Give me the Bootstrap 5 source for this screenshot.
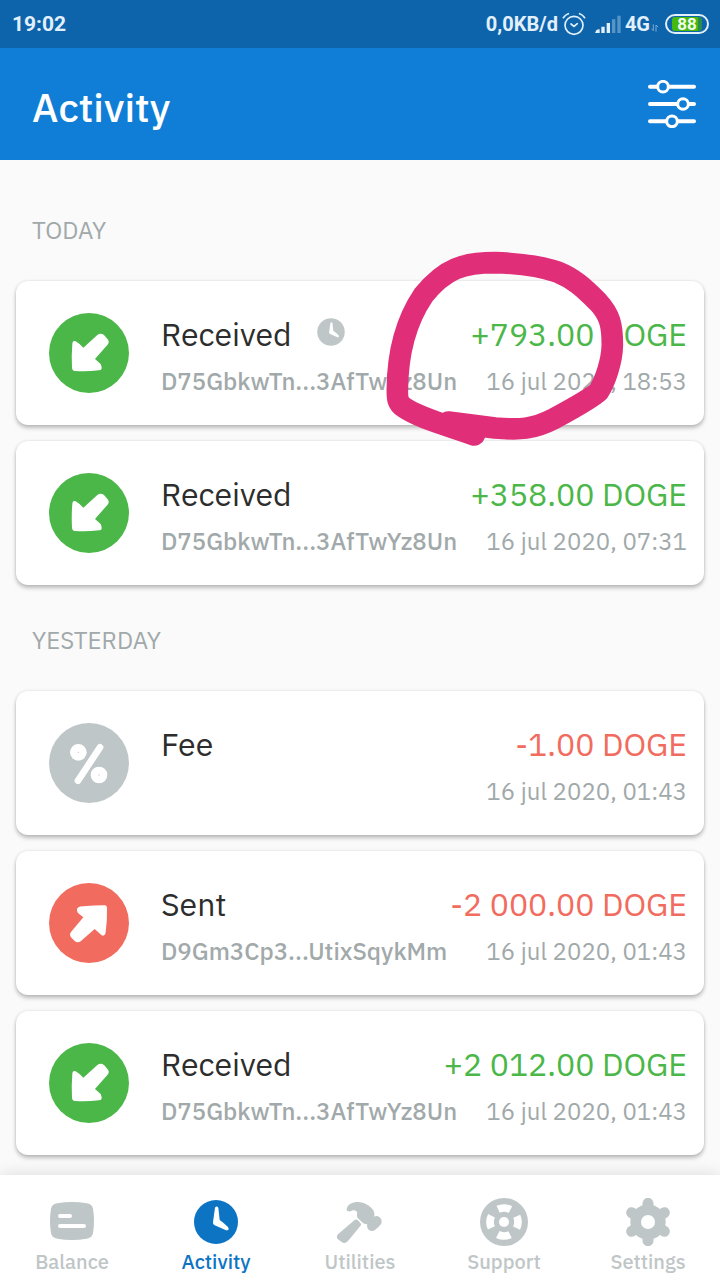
<!DOCTYPE html>
<html lang="en">
<head>
<meta charset="utf-8">
<meta name="viewport" content="width=device-width, initial-scale=1">
<title>Activity</title>
<link href="https://cdn.jsdelivr.net/npm/bootstrap@5.3.0/dist/css/bootstrap.min.css" rel="stylesheet">
<style>
  :root { --in: #4bb748; --out: #f16c5e; --muted: #a1a9aa; --idle: #bfc6c7; --brand: #0d74c4; }
  body { background: #fafafa; color: #2d2d2d; font-family: "IBM Plex Sans", Roboto, sans-serif; }
  .status-bar { background: #0e64ab; color: #e2f0fb; height: 48px; padding: 0 11px 0 12px; font: 700 20px/48px Roboto, sans-serif; }
  .status-time { font-size: 21px; }
  .battery { width: 44px; height: 20px; margin-left: 6px; border: 2px solid #e2f0fb; border-radius: 10px; padding: 1px 5px; }
  .battery-level { background: linear-gradient(90deg, #45b90c 88%, #2b8c50 88%); color: #f4fff0; border-radius: 3px; height: 14px; font-size: 17px; line-height: 14px; }
  .app-header { background: #107ed6; height: 112px; padding: 0 24px 0 32px; }
  .app-title { color: #fff; font-size: 40px; line-height: 48px; font-weight: 500; margin: 6px 0 0; }
  .filter-btn { line-height: 0; }
  .feed { padding: 15px 16px 20px; }
  .day { color: var(--muted); font-size: 24px; line-height: 30px; padding: 40px 16px 36px; margin: 0; font-weight: 400; }
  .tx { background: #fff; border-radius: 12px; padding: 32px 17px 18px 33px; gap: 32px; box-shadow: 0 3px 4px rgba(0,0,0,.24), 0 0 3px rgba(0,0,0,.12); }
  .tx-icon { width: 80px; height: 80px; }
  .tx-main { font-size: 32px; line-height: 42px; }
  .tx-sub { color: var(--muted); font-size: 24px; line-height: 52px; }
  .tx-sub .addr { font-weight: 500; }
  .pending { color: var(--idle); }
  .amount-in { color: var(--in); }
  .amount-out { color: var(--out); }
  .marker { top: -51px; right: 74px; }
  .tab-bar { background: #fff; box-shadow: 0 0 16px rgba(0,0,0,.13); padding: 23px 0 4px; }
  .tab-bar a { color: var(--idle); font-size: 20px; line-height: 32px; font-weight: 500; }
  .tab-bar a.active { color: var(--brand); }
</style>
</head>
<body class="d-flex flex-column min-vh-100">

<svg width="0" height="0" class="position-absolute" aria-hidden="true">
  <symbol id="arrow-in" viewBox="0 0 240 240">
    <circle cx="120" cy="120" r="120" fill="#4bb748"/>
    <path fill="#fff" d="M70 92Q70 81 80 85Q92 92 103 104L145 66Q155 59 165 66L176 79Q183 88 175 96L138 138L155 153Q163 172 150 172Q115 176 78 174Q69 173 69 164Q67 128 70 92Z"/>
  </symbol>
  <symbol id="arrow-out" viewBox="0 0 240 240">
    <circle cx="120" cy="120" r="120" fill="#f16c5e"/>
    <path fill="#fff" d="M168 67Q174 68 174 75Q175 112 170 148Q168 161 158 157L137 138L95 175Q86 181 77 174L66 163Q60 155 66 147L103 103L87 90Q80 80 88 73Q92 70 103 70Q135 67 168 67Z"/>
  </symbol>
  <symbol id="percent" viewBox="0 0 240 240">
    <circle cx="120" cy="120" r="120" fill="#bfc6c7"/>
    <path d="M153 73L87 173" stroke="#fff" stroke-width="20" stroke-linecap="round"/>
    <circle cx="88" cy="88" r="25" fill="#fff"/><circle cx="150" cy="156" r="25" fill="#fff"/>
    <circle cx="88" cy="88" r="2" fill="#d9c4c5"/><circle cx="150" cy="156" r="2" fill="#d9c4c5"/>
  </symbol>
  <symbol id="clock" viewBox="0 0 144 144">
    <circle cx="72" cy="72" r="66" fill="currentColor"/>
    <path fill="#fff" d="M69 29Q74 22 79 29L83 66Q97 76 108 87Q114 98 102 97L68 82Q62 79 63 72Z"/>
  </symbol>
</svg>

<div class="status-bar d-flex align-items-center">
  <span class="status-time me-auto">19:02</span>
  <span>0,0KB/d</span>
  <svg class="ms-1" width="24" height="24" viewBox="0 0 72 72" fill="none" stroke="#e2f0fb" stroke-width="5" stroke-linecap="round" aria-label="Alarm"><circle cx="36" cy="40" r="27"/><path d="M27 36L36 43L46 35M4 17Q10 8 19 5M68 17Q62 8 53 5"/></svg>
  <svg class="ms-2" width="27" height="20" viewBox="0 0 81 60" fill="#e2f0fb" aria-label="Signal"><path d="M3 57L7 49Q9 46 17 46V57ZM22 38h10v19H22ZM38 27h10v30H38Z"/><path opacity=".35" d="M54 16h10v41H54ZM70 5h10v52H70Z"/></svg>
  <span class="ms-1">4G</span>
  <svg class="mt-2" width="9" height="8" viewBox="0 0 27 24" fill="none" stroke="#7ba9d1" stroke-width="3" aria-hidden="true"><path d="M10 1V20L4 14M18 23V3L24 9"/></svg>
  <div class="battery"><div class="battery-level text-center">88</div></div>
</div>

<header class="app-header d-flex align-items-center justify-content-between">
  <h1 class="app-title">Activity</h1>
  <button type="button" class="filter-btn btn border-0 p-0" aria-label="Filter">
    <svg width="48" height="48" viewBox="0 0 144 144" fill="#107ed6" stroke="#fff" stroke-linecap="round">
      <path stroke-width="12" d="M6 20H138M6 72H138M6 124H138"/>
      <g stroke-width="9"><circle cx="45" cy="20" r="16"/><circle cx="105" cy="72" r="16"/><circle cx="72" cy="124" r="16"/></g>
    </svg>
  </button>
</header>

<main class="feed flex-grow-1">
  <h2 class="day">TODAY</h2>
  <div class="d-flex flex-column gap-3">
    <article class="tx d-flex position-relative">
      <svg class="tx-icon flex-shrink-0"><use href="#arrow-in"/></svg>
      <div class="flex-grow-1">
        <div class="tx-main d-flex">
          <span>Received</span>
          <svg class="pending ms-4 mt-1" width="30" height="30" aria-label="Pending"><use href="#clock"/></svg>
          <span class="amount-in ms-auto">+793.00 DOGE</span>
        </div>
        <div class="tx-sub d-flex justify-content-between"><span class="addr">D75GbkwTn...3AfTwYz8Un</span><time>16 jul 2020, 18:53</time></div>
      </div>
      <svg class="marker position-absolute" width="260" height="220" viewBox="0 0 780 660" fill="none" stroke="#e02f78" stroke-width="65" stroke-linecap="round" stroke-linejoin="round" aria-hidden="true">
        <path d="M313 615C230 585 150 565 103 533C82 519 82 505 82 480C83 340 120 255 160 196C225 115 280 98 375 98C450 100 510 108 565 127C610 145 640 172 684 216C720 255 727 285 727 345C726 395 705 455 686 484C665 505 600 540 550 567C490 598 450 600 375 594L235 576"/>
      </svg>
    </article>
    <article class="tx d-flex">
      <svg class="tx-icon flex-shrink-0"><use href="#arrow-in"/></svg>
      <div class="flex-grow-1">
        <div class="tx-main d-flex justify-content-between"><span>Received</span><span class="amount-in">+358.00 DOGE</span></div>
        <div class="tx-sub d-flex justify-content-between"><span class="addr">D75GbkwTn...3AfTwYz8Un</span><time>16 jul 2020, 07:31</time></div>
      </div>
    </article>
  </div>

  <h2 class="day">YESTERDAY</h2>
  <div class="d-flex flex-column gap-3">
    <article class="tx d-flex">
      <svg class="tx-icon flex-shrink-0"><use href="#percent"/></svg>
      <div class="flex-grow-1">
        <div class="tx-main d-flex justify-content-between"><span>Fee</span><span class="amount-out">-1.00 DOGE</span></div>
        <div class="tx-sub d-flex justify-content-end"><time>16 jul 2020, 01:43</time></div>
      </div>
    </article>
    <article class="tx d-flex">
      <svg class="tx-icon flex-shrink-0"><use href="#arrow-out"/></svg>
      <div class="flex-grow-1">
        <div class="tx-main d-flex justify-content-between"><span>Sent</span><span class="amount-out">-2 000.00 DOGE</span></div>
        <div class="tx-sub d-flex justify-content-between"><span class="addr">D9Gm3Cp3...UtixSqykMm</span><time>16 jul 2020, 01:43</time></div>
      </div>
    </article>
    <article class="tx d-flex">
      <svg class="tx-icon flex-shrink-0"><use href="#arrow-in"/></svg>
      <div class="flex-grow-1">
        <div class="tx-main d-flex justify-content-between"><span>Received</span><span class="amount-in">+2 012.00 DOGE</span></div>
        <div class="tx-sub d-flex justify-content-between"><span class="addr">D75GbkwTn...3AfTwYz8Un</span><time>16 jul 2020, 01:43</time></div>
      </div>
    </article>
  </div>
</main>

<nav class="tab-bar sticky-bottom row row-cols-5 g-0 text-center">
  <a href="#balance" class="col text-decoration-none">
    <svg class="d-block mx-auto" width="48" height="48" viewBox="0 0 144 144"><path fill="currentColor" d="M28 16Q72 8 116 16Q132 18 135 32Q141 69 135 106Q132 120 116 122Q72 130 28 122Q12 120 9 106Q3 69 9 32Q12 18 28 16Z"/><path d="M36 54H66M36 84H108" stroke="#fff" stroke-width="12" stroke-linecap="round"/></svg>
    Balance</a>
  <a href="#activity" class="col text-decoration-none active" aria-current="page">
    <svg class="d-block mx-auto" width="48" height="48"><use href="#clock"/></svg>
    Activity</a>
  <a href="#utilities" class="col text-decoration-none">
    <svg class="d-block mx-auto" width="48" height="48" viewBox="0 0 144 144" fill="currentColor"><path d="M55 67Q60 62 65 66L74 76Q77 80 73 84L36 129Q27 138 18 133L6 124Q-1 117 6 109ZM32 34C34 14 62 8 80 14C100 20 116 36 115 48L115 56Q122 52 130 57Q141 65 135 78Q128 88 116 97Q107 102 98 95Q91 88 94 79Q87 79 80 74L65 60Q61 54 64 44Q60 35 50 37Q45 41 38 40Q31 39 32 34Z"/></svg>
    Utilities</a>
  <a href="#support" class="col text-decoration-none">
    <svg class="d-block mx-auto" width="48" height="48" viewBox="0 0 144 144"><circle cx="72" cy="72" r="72" fill="currentColor"/><circle cx="72" cy="72" r="42" fill="none" stroke="#fff" stroke-width="23" pathLength="360" stroke-dasharray="52 38" stroke-dashoffset="26"/><circle cx="72" cy="72" r="15" fill="#fff"/></svg>
    Support</a>
  <a href="#settings" class="col text-decoration-none">
    <svg class="d-block mx-auto" width="48" height="48" viewBox="0 0 144 144"><circle cx="72" cy="72" r="53" fill="currentColor"/><path d="M72 16V128M23 44L121 100M23 100L121 44" stroke="currentColor" stroke-width="33" stroke-linecap="round"/><circle cx="72" cy="72" r="21" fill="#fff"/></svg>
    Settings</a>
</nav>

<script src="https://cdn.jsdelivr.net/npm/bootstrap@5.3.0/dist/js/bootstrap.bundle.min.js"></script>
</body>
</html>
